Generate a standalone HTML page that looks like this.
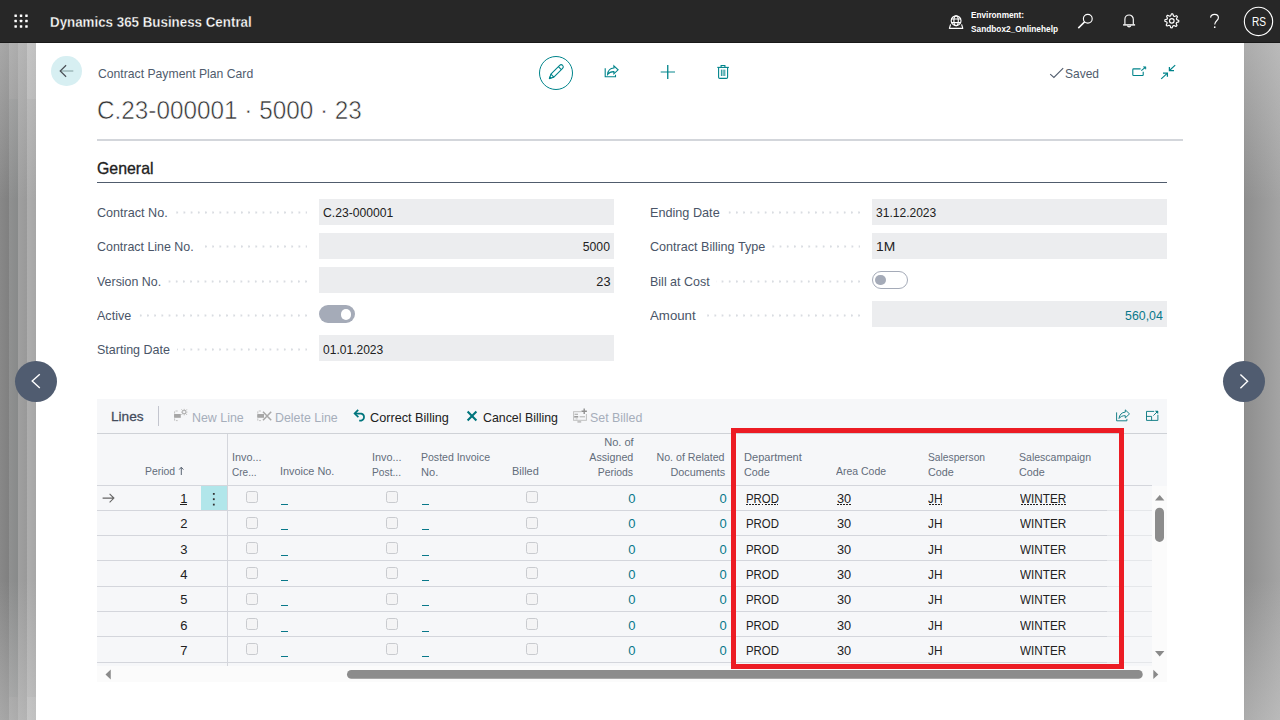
<!DOCTYPE html>
<html lang="en"><head><meta charset="utf-8"><title>Contract Payment Plan Card</title>
<style>
html,body{margin:0;padding:0;}
body{width:1280px;height:720px;overflow:hidden;position:relative;background:#fff;font-family:"Liberation Sans",sans-serif;}
.t{position:absolute;white-space:nowrap;}
.ttl{-webkit-text-stroke:0.55px #fff;}
.sbd{-webkit-text-stroke:0.3px #272727;}
.sbw{-webkit-text-stroke:0.3px #fff;}
.sbp{-webkit-text-stroke:0.3px #f6f7f9;}
svg{position:absolute;overflow:visible;}
</style></head><body>
<div style="position:absolute;left:0;top:43px;width:36px;height:677px;background:linear-gradient(90deg,#888 0,#808080 9px,#969696 9px,#8e8e8e 18px,#a0a0a0 18px,#999 27px,#b6b6b6 27px,#aeaeae 36px);"></div>
<div style="position:absolute;left:0;top:99px;width:36px;height:598px;background:linear-gradient(90deg,#888 0,#808080 9px,#909191 9px,#888a8a 18px,#a0a0a0 18px,#999 27px,#aeaeae 27px,#a6a6a6 36px);"></div>
<div style="position:absolute;left:1244px;top:43px;width:36px;height:677px;background:linear-gradient(90deg,#888 0,#8e8e8e 1px,#a4a4a4 36px);"></div>
<div style="position:absolute;left:0;top:43px;width:36px;height:677px;background:linear-gradient(180deg,rgba(224,224,224,.37) 0,rgba(224,224,224,0) 157px,rgba(224,224,224,0) 537px,rgba(224,224,224,.37) 677px);"></div>
<div style="position:absolute;left:1244px;top:43px;width:36px;height:677px;background:linear-gradient(180deg,rgba(224,224,224,.37) 0,rgba(224,224,224,0) 157px,rgba(224,224,224,0) 537px,rgba(224,224,224,.37) 677px);"></div>
<div style="position:absolute;left:0px;top:0px;width:1280px;height:43px;background:#272727;"></div>
<div style="position:absolute;left:0px;top:42px;width:1280px;height:1px;background:#191919;"></div>
<svg style="left:14px;top:14px" width="14" height="14" viewBox="0 0 14 14" fill="#fff"><rect x="0.4" y="0.4" width="2.5" height="2.5" rx="0.4"/><rect x="5.8" y="0.4" width="2.5" height="2.5" rx="0.4"/><rect x="11.2" y="0.4" width="2.5" height="2.5" rx="0.4"/><rect x="0.4" y="5.8" width="2.5" height="2.5" rx="0.4"/><rect x="5.8" y="5.8" width="2.5" height="2.5" rx="0.4"/><rect x="11.2" y="5.8" width="2.5" height="2.5" rx="0.4"/><rect x="0.4" y="11.2" width="2.5" height="2.5" rx="0.4"/><rect x="5.8" y="11.2" width="2.5" height="2.5" rx="0.4"/><rect x="11.2" y="11.2" width="2.5" height="2.5" rx="0.4"/></svg>
<div class="t sbd" style="top:14.93px;font-size:14.5px;line-height:14.5px;color:#fff;font-weight:bold;left:50.20px;transform-origin:0 50%;transform:scaleX(0.9201);">Dynamics 365 Business Central</div>
<div class="t" style="top:9.87px;font-size:9.6px;line-height:9.6px;color:#fff;font-weight:bold;left:971.23px;transform-origin:0 50%;transform:scaleX(0.8577);">Environment:</div>
<div class="t" style="top:23.77px;font-size:9.6px;line-height:9.6px;color:#fff;font-weight:bold;left:971.23px;transform-origin:0 50%;transform:scaleX(0.8636);">Sandbox2_Onlinehelp</div>
<svg style="left:0;top:0" width="1280" height="43" viewBox="0 0 1280 43"><circle cx="1258.5" cy="21.45" r="14.15" fill="none" stroke="#fff" stroke-width="1.1"/></svg>
<div class="t" style="top:16.42px;font-size:12.5px;line-height:12.5px;color:#fff;left:1251.64px;transform-origin:0 50%;transform:scaleX(0.8134);">RS</div>
<div style="position:absolute;left:51.1px;top:55.8px;width:30.7px;height:30.4px;border-radius:50%;background:#d7eff2;"></div>
<div class="t" style="top:67.00px;font-size:13px;line-height:13px;color:#505c6d;left:97.65px;transform-origin:0 50%;transform:scaleX(0.9378);">Contract Payment Plan Card</div>
<div class="t ttl" style="top:96.69px;font-size:26px;line-height:26px;color:#333;left:97.11px;transform-origin:0 50%;transform:scaleX(0.9348);">C.23-000001 · 5000 · 23</div>
<div class="t" style="top:66.50px;font-size:13px;line-height:13px;color:#505c6d;left:1064.66px;transform-origin:0 50%;transform:scaleX(0.9216);">Saved</div>
<div style="position:absolute;left:539px;top:56px;width:32px;height:32px;border:1px solid #00848b;border-radius:50%;"></div>
<div style="position:absolute;left:97px;top:139px;width:1086px;height:2px;background:#d3d6db;"></div>
<div class="t" style="top:159.78px;font-size:16.5px;line-height:16.5px;color:#212121;left:97.04px;transform-origin:0 50%;transform:scaleX(0.9623);-webkit-text-stroke:0.32px #212121;">General</div>
<div style="position:absolute;left:97px;top:182px;width:1070px;height:1px;background:#505c6d;"></div>
<div class="t" style="top:205.70px;font-size:13px;line-height:13px;color:#4a5568;left:97.18px;transform-origin:0 50%;transform:scaleX(0.9684);">Contract No.</div>
<div style="position:absolute;left:174.5px;top:211px;width:132.5px;height:3px;background:radial-gradient(circle at 6.2px 1.5px,#d9dce1 0.95px,rgba(217,220,225,0) 1.25px) right top/7.2px 3px repeat-x;"></div>
<div style="position:absolute;left:319px;top:199px;width:294.5px;height:26px;background:#ecedef;"></div>
<div class="t" style="top:205.70px;font-size:13px;line-height:13px;color:#212121;left:323.25px;transform-origin:0 50%;transform:scaleX(0.9335);">C.23-000001</div>
<div class="t" style="top:239.70px;font-size:13px;line-height:13px;color:#4a5568;left:97.19px;transform-origin:0 50%;transform:scaleX(0.9556);">Contract Line No.</div>
<div style="position:absolute;left:200.5px;top:245px;width:106.5px;height:3px;background:radial-gradient(circle at 6.2px 1.5px,#d9dce1 0.95px,rgba(217,220,225,0) 1.25px) right top/7.2px 3px repeat-x;"></div>
<div style="position:absolute;left:319px;top:233px;width:294.5px;height:26px;background:#ecedef;"></div>
<div class="t" style="top:239.70px;font-size:13px;line-height:13px;color:#212121;right:669.95px;transform-origin:100% 50%;transform:scaleX(0.9395);">5000</div>
<div class="t" style="top:274.70px;font-size:13px;line-height:13px;color:#4a5568;left:97.19px;transform-origin:0 50%;transform:scaleX(0.9549);">Version No.</div>
<div style="position:absolute;left:168px;top:280px;width:139px;height:3px;background:radial-gradient(circle at 6.2px 1.5px,#d9dce1 0.95px,rgba(217,220,225,0) 1.25px) right top/7.2px 3px repeat-x;"></div>
<div style="position:absolute;left:319px;top:267px;width:294.5px;height:26px;background:#ecedef;"></div>
<div class="t" style="top:274.70px;font-size:13px;line-height:13px;color:#212121;right:669.93px;transform-origin:100% 50%;transform:scaleX(0.9799);">23</div>
<div class="t" style="top:308.70px;font-size:13px;line-height:13px;color:#4a5568;left:97.19px;transform-origin:0 50%;transform:scaleX(0.9652);">Active</div>
<div style="position:absolute;left:138px;top:314px;width:169px;height:3px;background:radial-gradient(circle at 6.2px 1.5px,#d9dce1 0.95px,rgba(217,220,225,0) 1.25px) right top/7.2px 3px repeat-x;"></div>
<div class="t" style="top:342.70px;font-size:13px;line-height:13px;color:#4a5568;left:97.19px;transform-origin:0 50%;transform:scaleX(0.9611);">Starting Date</div>
<div style="position:absolute;left:176.75px;top:348px;width:130.25px;height:3px;background:radial-gradient(circle at 6.2px 1.5px,#d9dce1 0.95px,rgba(217,220,225,0) 1.25px) right top/7.2px 3px repeat-x;"></div>
<div style="position:absolute;left:319px;top:335px;width:294.5px;height:26px;background:#ecedef;"></div>
<div class="t" style="top:342.70px;font-size:13px;line-height:13px;color:#212121;left:323.26px;transform-origin:0 50%;transform:scaleX(0.9263);">01.01.2023</div>
<div class="t" style="top:205.70px;font-size:13px;line-height:13px;color:#4a5568;left:649.68px;transform-origin:0 50%;transform:scaleX(0.9737);">Ending Date</div>
<div style="position:absolute;left:726.0px;top:211px;width:134.0px;height:3px;background:radial-gradient(circle at 6.2px 1.5px,#d9dce1 0.95px,rgba(217,220,225,0) 1.25px) right top/7.2px 3px repeat-x;"></div>
<div style="position:absolute;left:872px;top:199px;width:295px;height:26px;background:#ecedef;"></div>
<div class="t" style="top:205.70px;font-size:13px;line-height:13px;color:#212121;left:876.26px;transform-origin:0 50%;transform:scaleX(0.9263);">31.12.2023</div>
<div class="t" style="top:239.70px;font-size:13px;line-height:13px;color:#4a5568;left:649.68px;transform-origin:0 50%;transform:scaleX(0.9679);">Contract Billing Type</div>
<div style="position:absolute;left:771.5px;top:245px;width:88.5px;height:3px;background:radial-gradient(circle at 6.2px 1.5px,#d9dce1 0.95px,rgba(217,220,225,0) 1.25px) right top/7.2px 3px repeat-x;"></div>
<div style="position:absolute;left:872px;top:233px;width:295px;height:26px;background:#ecedef;"></div>
<div class="t" style="top:239.70px;font-size:13px;line-height:13px;color:#212121;left:876.18px;transform-origin:0 50%;transform:scaleX(1.0615);">1M</div>
<div class="t" style="top:274.70px;font-size:13px;line-height:13px;color:#4a5568;left:649.69px;transform-origin:0 50%;transform:scaleX(0.9604);">Bill at Cost</div>
<div style="position:absolute;left:716.0px;top:280px;width:144.0px;height:3px;background:radial-gradient(circle at 6.2px 1.5px,#d9dce1 0.95px,rgba(217,220,225,0) 1.25px) right top/7.2px 3px repeat-x;"></div>
<div class="t" style="top:308.70px;font-size:13px;line-height:13px;color:#4a5568;left:649.65px;transform-origin:0 50%;transform:scaleX(1.0194);">Amount</div>
<div style="position:absolute;left:702.0px;top:314px;width:158.0px;height:3px;background:radial-gradient(circle at 6.2px 1.5px,#d9dce1 0.95px,rgba(217,220,225,0) 1.25px) right top/7.2px 3px repeat-x;"></div>
<div style="position:absolute;left:872px;top:301px;width:295px;height:26px;background:#ecedef;"></div>
<div class="t" style="top:308.70px;font-size:13px;line-height:13px;color:#08788a;right:116.95px;transform-origin:100% 50%;transform:scaleX(0.9474);">560,04</div>
<div style="position:absolute;left:319px;top:305px;width:36px;height:18px;border-radius:9px;background:#a5abb8;"></div>
<div style="position:absolute;left:340.8px;top:309px;width:10.6px;height:10.6px;border-radius:50%;background:#fff;"></div>
<div style="position:absolute;left:872px;top:271px;width:34px;height:16px;border-radius:9px;border:1px solid #a5abb8;background:#fff;"></div>
<div style="position:absolute;left:875.2px;top:274.7px;width:10.6px;height:10.6px;border-radius:50%;background:#a5abb8;"></div>
<div style="position:absolute;left:15px;top:360.6px;width:42px;height:41.4px;border-radius:50%;background:#505c70;"></div>
<div style="position:absolute;left:1223px;top:360.6px;width:42px;height:41.4px;border-radius:50%;background:#505c70;"></div>
<div style="position:absolute;left:97px;top:399px;width:1070px;height:283px;background:#f6f7f9;"></div>
<div class="t" style="top:410.32px;font-size:13.5px;line-height:13.5px;color:#444c5c;left:110.64px;transform-origin:0 50%;transform:scaleX(1.0106);-webkit-text-stroke:0.27px #444c5c;">Lines</div>
<div style="position:absolute;left:158px;top:406px;width:1px;height:20px;background:#c3c5ce;"></div>
<div class="t" style="top:410.90px;font-size:13px;line-height:13px;color:#a6aebb;left:191.64px;transform-origin:0 50%;transform:scaleX(0.9552);">New Line</div>
<div class="t" style="top:410.90px;font-size:13px;line-height:13px;color:#a6aebb;left:274.94px;transform-origin:0 50%;transform:scaleX(0.9529);">Delete Line</div>
<div class="t" style="top:410.90px;font-size:13px;line-height:13px;color:#212121;left:370.13px;transform-origin:0 50%;transform:scaleX(0.9747);">Correct Billing</div>
<div class="t" style="top:410.90px;font-size:13px;line-height:13px;color:#212121;left:482.69px;transform-origin:0 50%;transform:scaleX(0.9512);">Cancel Billing</div>
<div class="t" style="top:410.90px;font-size:13px;line-height:13px;color:#a6aebb;left:590.19px;transform-origin:0 50%;transform:scaleX(0.9545);">Set Billed</div>
<div style="position:absolute;left:97px;top:433px;width:1070px;height:1px;background:#cfd2d7;"></div>
<div class="t" style="top:465.87px;font-size:11.5px;line-height:11.5px;color:#636d7b;left:145.03px;transform-origin:0 50%;transform:scaleX(0.9035);">Period</div>
<div class="t" style="top:452.17px;font-size:11.5px;line-height:11.5px;color:#636d7b;left:231.51px;transform-origin:0 50%;transform:scaleX(0.9430);">Invo...</div>
<div class="t" style="top:466.87px;font-size:11.5px;line-height:11.5px;color:#636d7b;left:231.55px;transform-origin:0 50%;transform:scaleX(0.8727);">Cre...</div>
<div class="t" style="top:465.87px;font-size:11.5px;line-height:11.5px;color:#636d7b;left:280.01px;transform-origin:0 50%;transform:scaleX(0.9436);">Invoice No.</div>
<div class="t" style="top:452.17px;font-size:11.5px;line-height:11.5px;color:#636d7b;left:372.01px;transform-origin:0 50%;transform:scaleX(0.9430);">Invo...</div>
<div class="t" style="top:466.87px;font-size:11.5px;line-height:11.5px;color:#636d7b;left:372.04px;transform-origin:0 50%;transform:scaleX(0.8907);">Post...</div>
<div class="t" style="top:452.17px;font-size:11.5px;line-height:11.5px;color:#636d7b;left:420.78px;transform-origin:0 50%;transform:scaleX(0.9152);">Posted Invoice</div>
<div class="t" style="top:466.87px;font-size:11.5px;line-height:11.5px;color:#636d7b;left:420.75px;transform-origin:0 50%;transform:scaleX(0.9659);">No.</div>
<div class="t" style="top:465.87px;font-size:11.5px;line-height:11.5px;color:#636d7b;left:512.01px;transform-origin:0 50%;transform:scaleX(0.9523);">Billed</div>
<div class="t" style="top:437.17px;font-size:11.5px;line-height:11.5px;color:#636d7b;right:646.50px;transform-origin:100% 50%;transform:scaleX(0.9626);">No. of</div>
<div class="t" style="top:452.17px;font-size:11.5px;line-height:11.5px;color:#636d7b;right:646.52px;transform-origin:100% 50%;transform:scaleX(0.9308);">Assigned</div>
<div class="t" style="top:466.87px;font-size:11.5px;line-height:11.5px;color:#636d7b;right:646.53px;transform-origin:100% 50%;transform:scaleX(0.9049);">Periods</div>
<div class="t" style="top:452.17px;font-size:11.5px;line-height:11.5px;color:#636d7b;right:555.02px;transform-origin:100% 50%;transform:scaleX(0.9255);">No. of Related</div>
<div class="t" style="top:466.87px;font-size:11.5px;line-height:11.5px;color:#636d7b;right:555.01px;transform-origin:100% 50%;transform:scaleX(0.9419);">Documents</div>
<div class="t" style="top:452.17px;font-size:11.5px;line-height:11.5px;color:#636d7b;left:744.00px;transform-origin:0 50%;transform:scaleX(0.9618);">Department</div>
<div class="t" style="top:466.87px;font-size:11.5px;line-height:11.5px;color:#636d7b;left:744.01px;transform-origin:0 50%;transform:scaleX(0.9379);">Code</div>
<div class="t" style="top:465.87px;font-size:11.5px;line-height:11.5px;color:#636d7b;left:836.28px;transform-origin:0 50%;transform:scaleX(0.9101);">Area Code</div>
<div class="t" style="top:452.17px;font-size:11.5px;line-height:11.5px;color:#636d7b;left:927.79px;transform-origin:0 50%;transform:scaleX(0.8922);">Salesperson</div>
<div class="t" style="top:466.87px;font-size:11.5px;line-height:11.5px;color:#636d7b;left:927.76px;transform-origin:0 50%;transform:scaleX(0.9379);">Code</div>
<div class="t" style="top:452.17px;font-size:11.5px;line-height:11.5px;color:#636d7b;left:1019.03px;transform-origin:0 50%;transform:scaleX(0.9161);">Salescampaign</div>
<div class="t" style="top:466.87px;font-size:11.5px;line-height:11.5px;color:#636d7b;left:1019.01px;transform-origin:0 50%;transform:scaleX(0.9379);">Code</div>
<div style="position:absolute;left:1152px;top:486px;width:15px;height:180px;background:#fbfbfb;"></div>
<div style="position:absolute;left:97px;top:666px;width:1070px;height:16px;background:#fbfbfb;"></div>
<div style="position:absolute;left:201.25px;top:486px;width:25.75px;height:24px;background:#b1e6ea;"></div>
<div style="position:absolute;left:97px;top:485px;width:1055px;height:1px;background:#d4d6dc;"></div>
<div style="position:absolute;left:97px;top:510px;width:1010px;height:1px;background:#d4d6dc;"></div>
<div style="position:absolute;left:1107px;top:510px;width:45px;height:1px;background:#e5e7ea;"></div>
<div style="position:absolute;left:97px;top:535px;width:1010px;height:1px;background:#d4d6dc;"></div>
<div style="position:absolute;left:1107px;top:535px;width:45px;height:1px;background:#e5e7ea;"></div>
<div style="position:absolute;left:97px;top:560px;width:1010px;height:1px;background:#d4d6dc;"></div>
<div style="position:absolute;left:1107px;top:560px;width:45px;height:1px;background:#e5e7ea;"></div>
<div style="position:absolute;left:97px;top:586px;width:1010px;height:1px;background:#d4d6dc;"></div>
<div style="position:absolute;left:1107px;top:586px;width:45px;height:1px;background:#e5e7ea;"></div>
<div style="position:absolute;left:97px;top:611px;width:1010px;height:1px;background:#d4d6dc;"></div>
<div style="position:absolute;left:1107px;top:611px;width:45px;height:1px;background:#e5e7ea;"></div>
<div style="position:absolute;left:97px;top:636px;width:1010px;height:1px;background:#d4d6dc;"></div>
<div style="position:absolute;left:1107px;top:636px;width:45px;height:1px;background:#e5e7ea;"></div>
<div style="position:absolute;left:97px;top:662px;width:1010px;height:1px;background:#d4d6dc;"></div>
<div style="position:absolute;left:1107px;top:662px;width:45px;height:1px;background:#e5e7ea;"></div>
<div style="position:absolute;left:227px;top:434px;width:1px;height:232px;background:#d4d6dc;"></div>
<svg style="left:0;top:0" width="1280" height="720" viewBox="0 0 1280 720"><path d="M102.6 498.1H113.6M109.6 493.8L113.9 498.1L109.6 502.4" fill="none" stroke="#666" stroke-width="1.1"/><rect x="212.9" y="493.0" width="1.8" height="1.8" fill="#333"/><rect x="212.9" y="498.3" width="1.8" height="1.8" fill="#333"/><rect x="212.9" y="503.7" width="1.8" height="1.8" fill="#333"/><path d="M181.3 475V467.4M179.2 469.6L181.3 467.2L183.4 469.6" fill="none" stroke="#5a6473" stroke-width="1"/></svg>
<div class="t" style="top:492.00px;font-size:13px;line-height:13px;color:#212121;right:1092.41px;transform-origin:100% 50%;">1</div>
<div style="position:absolute;left:246px;top:491px;width:10px;height:10px;border:1px solid #c9cbcf;border-radius:2.5px;background:#f4f4f5;"></div>
<div style="position:absolute;left:386px;top:491px;width:10px;height:10px;border:1px solid #c9cbcf;border-radius:2.5px;background:#f4f4f5;"></div>
<div style="position:absolute;left:526px;top:491px;width:10px;height:10px;border:1px solid #c9cbcf;border-radius:2.5px;background:#f4f4f5;"></div>
<div style="position:absolute;left:281px;top:504px;width:7.1px;height:1.2px;background:#08788a;"></div>
<div style="position:absolute;left:421.7px;top:504px;width:7.1px;height:1.2px;background:#08788a;"></div>
<div class="t" style="top:492.00px;font-size:13px;line-height:13px;color:#08788a;right:644.41px;transform-origin:100% 50%;">0</div>
<div class="t" style="top:492.00px;font-size:13px;line-height:13px;color:#08788a;right:553.16px;transform-origin:100% 50%;">0</div>
<div class="t" style="top:492.00px;font-size:13px;line-height:13px;color:#212121;left:745.89px;transform-origin:0 50%;transform:scaleX(0.8778);">PROD</div>
<div class="t" style="top:492.00px;font-size:13px;line-height:13px;color:#212121;left:836.93px;transform-origin:0 50%;transform:scaleX(0.9799);">30</div>
<div class="t" style="top:492.00px;font-size:13px;line-height:13px;color:#212121;left:928.22px;transform-origin:0 50%;transform:scaleX(0.9076);">JH</div>
<div class="t" style="top:492.00px;font-size:13px;line-height:13px;color:#212121;left:1020.22px;transform-origin:0 50%;transform:scaleX(0.9005);">WINTER</div>
<div class="t" style="top:517.00px;font-size:13px;line-height:13px;color:#212121;right:1092.41px;transform-origin:100% 50%;">2</div>
<div style="position:absolute;left:246px;top:517px;width:10px;height:10px;border:1px solid #c9cbcf;border-radius:2.5px;background:#f4f4f5;"></div>
<div style="position:absolute;left:386px;top:517px;width:10px;height:10px;border:1px solid #c9cbcf;border-radius:2.5px;background:#f4f4f5;"></div>
<div style="position:absolute;left:526px;top:517px;width:10px;height:10px;border:1px solid #c9cbcf;border-radius:2.5px;background:#f4f4f5;"></div>
<div style="position:absolute;left:281px;top:529px;width:7.1px;height:1.2px;background:#08788a;"></div>
<div style="position:absolute;left:421.7px;top:529px;width:7.1px;height:1.2px;background:#08788a;"></div>
<div class="t" style="top:517.00px;font-size:13px;line-height:13px;color:#08788a;right:644.41px;transform-origin:100% 50%;">0</div>
<div class="t" style="top:517.00px;font-size:13px;line-height:13px;color:#08788a;right:553.16px;transform-origin:100% 50%;">0</div>
<div class="t" style="top:517.00px;font-size:13px;line-height:13px;color:#212121;left:745.89px;transform-origin:0 50%;transform:scaleX(0.8778);">PROD</div>
<div class="t" style="top:517.00px;font-size:13px;line-height:13px;color:#212121;left:836.93px;transform-origin:0 50%;transform:scaleX(0.9799);">30</div>
<div class="t" style="top:517.00px;font-size:13px;line-height:13px;color:#212121;left:928.22px;transform-origin:0 50%;transform:scaleX(0.9076);">JH</div>
<div class="t" style="top:517.00px;font-size:13px;line-height:13px;color:#212121;left:1020.22px;transform-origin:0 50%;transform:scaleX(0.9005);">WINTER</div>
<div class="t" style="top:543.00px;font-size:13px;line-height:13px;color:#212121;right:1092.41px;transform-origin:100% 50%;">3</div>
<div style="position:absolute;left:246px;top:542px;width:10px;height:10px;border:1px solid #c9cbcf;border-radius:2.5px;background:#f4f4f5;"></div>
<div style="position:absolute;left:386px;top:542px;width:10px;height:10px;border:1px solid #c9cbcf;border-radius:2.5px;background:#f4f4f5;"></div>
<div style="position:absolute;left:526px;top:542px;width:10px;height:10px;border:1px solid #c9cbcf;border-radius:2.5px;background:#f4f4f5;"></div>
<div style="position:absolute;left:281px;top:555px;width:7.1px;height:1.2px;background:#08788a;"></div>
<div style="position:absolute;left:421.7px;top:555px;width:7.1px;height:1.2px;background:#08788a;"></div>
<div class="t" style="top:543.00px;font-size:13px;line-height:13px;color:#08788a;right:644.41px;transform-origin:100% 50%;">0</div>
<div class="t" style="top:543.00px;font-size:13px;line-height:13px;color:#08788a;right:553.16px;transform-origin:100% 50%;">0</div>
<div class="t" style="top:543.00px;font-size:13px;line-height:13px;color:#212121;left:745.89px;transform-origin:0 50%;transform:scaleX(0.8778);">PROD</div>
<div class="t" style="top:543.00px;font-size:13px;line-height:13px;color:#212121;left:836.93px;transform-origin:0 50%;transform:scaleX(0.9799);">30</div>
<div class="t" style="top:543.00px;font-size:13px;line-height:13px;color:#212121;left:928.22px;transform-origin:0 50%;transform:scaleX(0.9076);">JH</div>
<div class="t" style="top:543.00px;font-size:13px;line-height:13px;color:#212121;left:1020.22px;transform-origin:0 50%;transform:scaleX(0.9005);">WINTER</div>
<div class="t" style="top:568.00px;font-size:13px;line-height:13px;color:#212121;right:1092.41px;transform-origin:100% 50%;">4</div>
<div style="position:absolute;left:246px;top:567px;width:10px;height:10px;border:1px solid #c9cbcf;border-radius:2.5px;background:#f4f4f5;"></div>
<div style="position:absolute;left:386px;top:567px;width:10px;height:10px;border:1px solid #c9cbcf;border-radius:2.5px;background:#f4f4f5;"></div>
<div style="position:absolute;left:526px;top:567px;width:10px;height:10px;border:1px solid #c9cbcf;border-radius:2.5px;background:#f4f4f5;"></div>
<div style="position:absolute;left:281px;top:580px;width:7.1px;height:1.2px;background:#08788a;"></div>
<div style="position:absolute;left:421.7px;top:580px;width:7.1px;height:1.2px;background:#08788a;"></div>
<div class="t" style="top:568.00px;font-size:13px;line-height:13px;color:#08788a;right:644.41px;transform-origin:100% 50%;">0</div>
<div class="t" style="top:568.00px;font-size:13px;line-height:13px;color:#08788a;right:553.16px;transform-origin:100% 50%;">0</div>
<div class="t" style="top:568.00px;font-size:13px;line-height:13px;color:#212121;left:745.89px;transform-origin:0 50%;transform:scaleX(0.8778);">PROD</div>
<div class="t" style="top:568.00px;font-size:13px;line-height:13px;color:#212121;left:836.93px;transform-origin:0 50%;transform:scaleX(0.9799);">30</div>
<div class="t" style="top:568.00px;font-size:13px;line-height:13px;color:#212121;left:928.22px;transform-origin:0 50%;transform:scaleX(0.9076);">JH</div>
<div class="t" style="top:568.00px;font-size:13px;line-height:13px;color:#212121;left:1020.22px;transform-origin:0 50%;transform:scaleX(0.9005);">WINTER</div>
<div class="t" style="top:593.00px;font-size:13px;line-height:13px;color:#212121;right:1092.41px;transform-origin:100% 50%;">5</div>
<div style="position:absolute;left:246px;top:593px;width:10px;height:10px;border:1px solid #c9cbcf;border-radius:2.5px;background:#f4f4f5;"></div>
<div style="position:absolute;left:386px;top:593px;width:10px;height:10px;border:1px solid #c9cbcf;border-radius:2.5px;background:#f4f4f5;"></div>
<div style="position:absolute;left:526px;top:593px;width:10px;height:10px;border:1px solid #c9cbcf;border-radius:2.5px;background:#f4f4f5;"></div>
<div style="position:absolute;left:281px;top:605px;width:7.1px;height:1.2px;background:#08788a;"></div>
<div style="position:absolute;left:421.7px;top:605px;width:7.1px;height:1.2px;background:#08788a;"></div>
<div class="t" style="top:593.00px;font-size:13px;line-height:13px;color:#08788a;right:644.41px;transform-origin:100% 50%;">0</div>
<div class="t" style="top:593.00px;font-size:13px;line-height:13px;color:#08788a;right:553.16px;transform-origin:100% 50%;">0</div>
<div class="t" style="top:593.00px;font-size:13px;line-height:13px;color:#212121;left:745.89px;transform-origin:0 50%;transform:scaleX(0.8778);">PROD</div>
<div class="t" style="top:593.00px;font-size:13px;line-height:13px;color:#212121;left:836.93px;transform-origin:0 50%;transform:scaleX(0.9799);">30</div>
<div class="t" style="top:593.00px;font-size:13px;line-height:13px;color:#212121;left:928.22px;transform-origin:0 50%;transform:scaleX(0.9076);">JH</div>
<div class="t" style="top:593.00px;font-size:13px;line-height:13px;color:#212121;left:1020.22px;transform-origin:0 50%;transform:scaleX(0.9005);">WINTER</div>
<div class="t" style="top:619.00px;font-size:13px;line-height:13px;color:#212121;right:1092.41px;transform-origin:100% 50%;">6</div>
<div style="position:absolute;left:246px;top:618px;width:10px;height:10px;border:1px solid #c9cbcf;border-radius:2.5px;background:#f4f4f5;"></div>
<div style="position:absolute;left:386px;top:618px;width:10px;height:10px;border:1px solid #c9cbcf;border-radius:2.5px;background:#f4f4f5;"></div>
<div style="position:absolute;left:526px;top:618px;width:10px;height:10px;border:1px solid #c9cbcf;border-radius:2.5px;background:#f4f4f5;"></div>
<div style="position:absolute;left:281px;top:631px;width:7.1px;height:1.2px;background:#08788a;"></div>
<div style="position:absolute;left:421.7px;top:631px;width:7.1px;height:1.2px;background:#08788a;"></div>
<div class="t" style="top:619.00px;font-size:13px;line-height:13px;color:#08788a;right:644.41px;transform-origin:100% 50%;">0</div>
<div class="t" style="top:619.00px;font-size:13px;line-height:13px;color:#08788a;right:553.16px;transform-origin:100% 50%;">0</div>
<div class="t" style="top:619.00px;font-size:13px;line-height:13px;color:#212121;left:745.89px;transform-origin:0 50%;transform:scaleX(0.8778);">PROD</div>
<div class="t" style="top:619.00px;font-size:13px;line-height:13px;color:#212121;left:836.93px;transform-origin:0 50%;transform:scaleX(0.9799);">30</div>
<div class="t" style="top:619.00px;font-size:13px;line-height:13px;color:#212121;left:928.22px;transform-origin:0 50%;transform:scaleX(0.9076);">JH</div>
<div class="t" style="top:619.00px;font-size:13px;line-height:13px;color:#212121;left:1020.22px;transform-origin:0 50%;transform:scaleX(0.9005);">WINTER</div>
<div class="t" style="top:644.00px;font-size:13px;line-height:13px;color:#212121;right:1092.41px;transform-origin:100% 50%;">7</div>
<div style="position:absolute;left:246px;top:643px;width:10px;height:10px;border:1px solid #c9cbcf;border-radius:2.5px;background:#f4f4f5;"></div>
<div style="position:absolute;left:386px;top:643px;width:10px;height:10px;border:1px solid #c9cbcf;border-radius:2.5px;background:#f4f4f5;"></div>
<div style="position:absolute;left:526px;top:643px;width:10px;height:10px;border:1px solid #c9cbcf;border-radius:2.5px;background:#f4f4f5;"></div>
<div style="position:absolute;left:281px;top:656px;width:7.1px;height:1.2px;background:#08788a;"></div>
<div style="position:absolute;left:421.7px;top:656px;width:7.1px;height:1.2px;background:#08788a;"></div>
<div class="t" style="top:644.00px;font-size:13px;line-height:13px;color:#08788a;right:644.41px;transform-origin:100% 50%;">0</div>
<div class="t" style="top:644.00px;font-size:13px;line-height:13px;color:#08788a;right:553.16px;transform-origin:100% 50%;">0</div>
<div class="t" style="top:644.00px;font-size:13px;line-height:13px;color:#212121;left:745.89px;transform-origin:0 50%;transform:scaleX(0.8778);">PROD</div>
<div class="t" style="top:644.00px;font-size:13px;line-height:13px;color:#212121;left:836.93px;transform-origin:0 50%;transform:scaleX(0.9799);">30</div>
<div class="t" style="top:644.00px;font-size:13px;line-height:13px;color:#212121;left:928.22px;transform-origin:0 50%;transform:scaleX(0.9076);">JH</div>
<div class="t" style="top:644.00px;font-size:13px;line-height:13px;color:#212121;left:1020.22px;transform-origin:0 50%;transform:scaleX(0.9005);">WINTER</div>
<div style="position:absolute;left:180.4px;top:504px;width:6.8px;height:1px;background:#212121;"></div>
<div style="position:absolute;left:745.8px;top:504px;width:32.2px;height:1px;background:repeating-linear-gradient(90deg,#212121 0,#212121 2px,rgba(33,33,33,0) 2px,rgba(33,33,33,0) 3.1px);"></div>
<div style="position:absolute;left:837.4px;top:504px;width:13.2px;height:1px;background:repeating-linear-gradient(90deg,#212121 0,#212121 2px,rgba(33,33,33,0) 2px,rgba(33,33,33,0) 3.1px);"></div>
<div style="position:absolute;left:928.6px;top:504px;width:13.4px;height:1px;background:repeating-linear-gradient(90deg,#212121 0,#212121 2px,rgba(33,33,33,0) 2px,rgba(33,33,33,0) 3.1px);"></div>
<div style="position:absolute;left:1020.6px;top:504px;width:45.2px;height:1px;background:repeating-linear-gradient(90deg,#212121 0,#212121 2px,rgba(33,33,33,0) 2px,rgba(33,33,33,0) 3.1px);"></div>
<svg style="left:0;top:0" width="1280" height="720" viewBox="0 0 1280 720"><path d="M1155 500.4L1159.7 495L1164.4 500.4Z" fill="#8a8a8a"/><path d="M1155 651L1159.7 656.4L1164.4 651Z" fill="#8a8a8a"/><rect x="1155" y="507.7" width="9" height="34.2" rx="4.5" fill="#8c8c8c"/><path d="M110.75 669.5L105.5 674.5L110.75 679.5Z" fill="#8a8a8a"/><path d="M1153.3 669.8L1158.3 674.4L1153.3 679Z" fill="#8a8a8a"/><rect x="347" y="670" width="795.7" height="8.8" rx="4.4" fill="#8c8c8c"/></svg>
<div style="position:absolute;left:731px;top:428px;width:383px;height:231px;border:5px solid #ec1c24;"></div>
<svg style="left:0;top:0" width="1280" height="720" viewBox="0 0 1280 720" fill="none"><g stroke="#fff" stroke-width="1.15" fill="none"><circle cx="956.1" cy="20.7" r="4.9"/><ellipse cx="956.1" cy="20.7" rx="2.2" ry="4.9"/><path d="M951.4 19H960.8M951.4 22.6H960.8"/><path d="M950.6 24.4L949.4 28.3H962.8L961.6 24.4" stroke-linejoin="round"/></g><g stroke="#fff" stroke-width="1.15" fill="none" stroke-width="1.3"><circle cx="1087.8" cy="18.7" r="4.4"/><path d="M1084.6 21.9L1078.3 28.1" stroke-width="1.5"/></g><g stroke="#fff" stroke-width="1.15" fill="none" stroke-width="1.25"><path d="M1124.9 24.6V19.2A4.2 4.2 0 0 1 1133.3 19.2V24.6"/><path d="M1123.1 24.9H1135.1" stroke-width="1.4"/><path d="M1127.4 25.6A1.8 1.8 0 0 0 1130.8 25.6"/></g><g stroke="#fff" stroke-width="1.15" fill="none" stroke-width="1.1"><path d="M1171.46 13.86L1172.83 13.93L1173.52 16.05L1174.42 16.48L1176.50 15.66L1177.42 16.68L1176.41 18.67L1176.75 19.61L1178.79 20.51L1178.72 21.88L1176.60 22.57L1176.17 23.47L1176.99 25.55L1175.97 26.47L1173.98 25.46L1173.04 25.80L1172.14 27.84L1170.77 27.77L1170.08 25.65L1169.18 25.22L1167.10 26.04L1166.18 25.02L1167.19 23.03L1166.85 22.09L1164.81 21.19L1164.88 19.82L1167.00 19.13L1167.43 18.23L1166.61 16.15L1167.63 15.23L1169.62 16.24L1170.56 15.90Z" stroke-linejoin="round"/><circle cx="1171.8" cy="20.85" r="2.3"/></g><g stroke="#fff" stroke-width="1.15" fill="none" stroke-width="1.3"><path d="M1210.6 17.6C1210.8 15.4 1212.6 14.4 1214.6 14.4C1216.9 14.4 1218.4 15.8 1218.4 17.7C1218.4 20.6 1214.7 21 1214.7 24.6" /><path d="M1214.7 26.4V28" stroke-width="1.5"/></g><path d="M60.2 71H73.3" stroke="#8fa9ab" stroke-width="1.2"/><path d="M66.1 65.2L60.2 71L66.1 76.8" stroke="#4a4f55" stroke-width="1.2"/><g transform="translate(549.4 78.6) rotate(-45)" stroke="#00848b" stroke-width="1.1" stroke-linejoin="round"><path d="M0 0L4.2 -2.1H16.6A2.1 2.1 0 0 1 16.6 2.1H4.2Z"/><path d="M4.2 -2.1V2.1M14.8 -2.1V2.1"/><path d="M0 0L1.6 -0.8V0.8Z" fill="#00848b"/></g><g stroke="#00848b" stroke-width="1.1" fill="none" stroke-linejoin="miter"><path d="M605.20 68.30V76.70H615.50V74.80"/><path d="M613.90 65.80L618.10 69.80L613.90 73.80V71.60C611.10 71.50 609.10 72.40 607.60 74.40C607.90 70.80 610.30 68.20 613.90 68.00Z"/></g><path d="M667.75 65V79.1" stroke="#00848b" stroke-width="1.3"/><path d="M660.7 72H675" stroke="#00848b" stroke-width="1.15" opacity="0.85"/><g stroke="#00848b" stroke-width="1.1"><path d="M717.3 67.4H728.9"/><path d="M721.1 67.2V65.5H724.9V67.2"/><path d="M718.6 67.6V77.2A1.2 1.2 0 0 0 719.8 78.4H726.4A1.2 1.2 0 0 0 727.6 77.2V67.6"/><path d="M721.4 69.6V76M723.1 69.6V76M724.8 69.6V76" stroke-width="0.9"/></g><path d="M1050.2 74.2L1053.9 77.4L1063.2 68.1" stroke="#505c6d" stroke-width="1.1"/><g stroke="#00848b" stroke-width="1.1"><path d="M1140.6 68.9H1133.6A0.8 0.8 0 0 0 1132.8 69.7V74.7A0.8 0.8 0 0 0 1133.6 75.5H1142.4A0.8 0.8 0 0 0 1143.2 74.7V71.7"/><path d="M1141.3 70.7L1145.3 67.3"/><path d="M1143.4 66.8H1145.8V69.2Z" fill="#00848b" stroke-width="0.6"/></g><g stroke="#00848b" stroke-width="1.15"><path d="M1175.2 65.1L1169.5 70.5"/><path d="M1169.4 67.1V70.6H1174" stroke-width="1.25"/><path d="M1161.2 78.9L1167.2 73.3"/><path d="M1163 73.2H1167.4V76.8" stroke-width="1.25"/></g><path d="M39.8 374.2L32.2 381.1L39.8 388" stroke="#fff" stroke-width="1.4"/><path d="M1240.4 374.4L1247.6 381.3L1240.4 388.2" stroke="#fff" stroke-width="1.4"/><g fill="none"><path d="M177.7 411.0H174.6V420.59999999999997H177.7" stroke="#c2c2c2" stroke-width="1" stroke-dasharray="2.2 1.3"/><rect x="174.1" y="414.0" width="6.7" height="3.8" fill="#a6a6a6"/></g><g stroke="#b0b0b0" stroke-width="0.9"><rect x="182.7" y="410.6" width="3" height="3"/><path d="M184.2 408.90000000000003V410.5M184.2 413.70000000000005V415.3M181.0 412.1H182.6M185.79999999999998 412.1H187.39999999999998M181.5 409.40000000000003L182.7 410.6M186.89999999999998 409.40000000000003L185.7 410.6M181.5 414.8L182.7 413.6M186.89999999999998 414.8L185.7 413.6"/></g><g fill="none"><path d="M260.90000000000003 411.0H257.8V420.59999999999997H260.90000000000003" stroke="#c2c2c2" stroke-width="1" stroke-dasharray="2.2 1.3"/><rect x="257.3" y="414.0" width="6.7" height="3.8" fill="#a6a6a6"/></g><path d="M263 411.7L271.2 420.3M271.2 411.7L263 420.3" stroke="#a8a8a8" stroke-width="1.5"/><g stroke="#00757d" stroke-width="1.7"><path d="M358.2 409.9L354.6 413.6L358.4 417.2"/><path d="M355 413.6H361.3A3.6 3.6 0 0 1 361.3 420.6H359.2"/></g><path d="M467.6 411.6L476.4 420.6M476.4 411.6L467.6 420.6" stroke="#00757d" stroke-width="2.1"/><g fill="none"><rect x="573.6" y="411.7" width="12.8" height="8.6" stroke="#c0c0c0" stroke-width="1"/><path d="M574.6 414.3H578" stroke="#b0b0b0" stroke-width="1.2"/><path d="M574.2 416.8H578.2" stroke="#9c9c9c" stroke-width="1.6"/><path d="M579.6 416.8H585" stroke="#b0b0b0" stroke-width="1"/><path d="M577.4 421.9H581.2" stroke="#b0b0b0" stroke-width="1.3"/><path d="M575.6 418.9H577.6" stroke="#c0c0c0" stroke-width="1"/><rect x="581.4" y="408.6" width="5.6" height="5.4" fill="#f6f7f9"/><path d="M584.2 408.6V413.9M581.5 411.25H586.9" stroke="#909090" stroke-width="1.4"/></g><g stroke="#0f7c85" stroke-width="0.95" fill="none" stroke-linejoin="miter"><path d="M1116.60 412.40V420.80H1126.90V418.90"/><path d="M1125.30 409.90L1129.50 413.90L1125.30 417.90V415.70C1122.50 415.60 1120.50 416.50 1119.00 418.50C1119.30 414.90 1121.70 412.30 1125.30 412.10Z"/></g><g stroke="#0f7c85" stroke-width="0.95"><path d="M1154.2 411.4H1146.5V420.4H1157.9V414.8"/><path d="M1146.5 416.4H1151.6V420.4"/><path d="M1153.4 415.6L1157.6 411.4"/><path d="M1155.4 411H1158V413.6Z" fill="#00757d" stroke-width="0.5"/></g></svg>
</body></html>
